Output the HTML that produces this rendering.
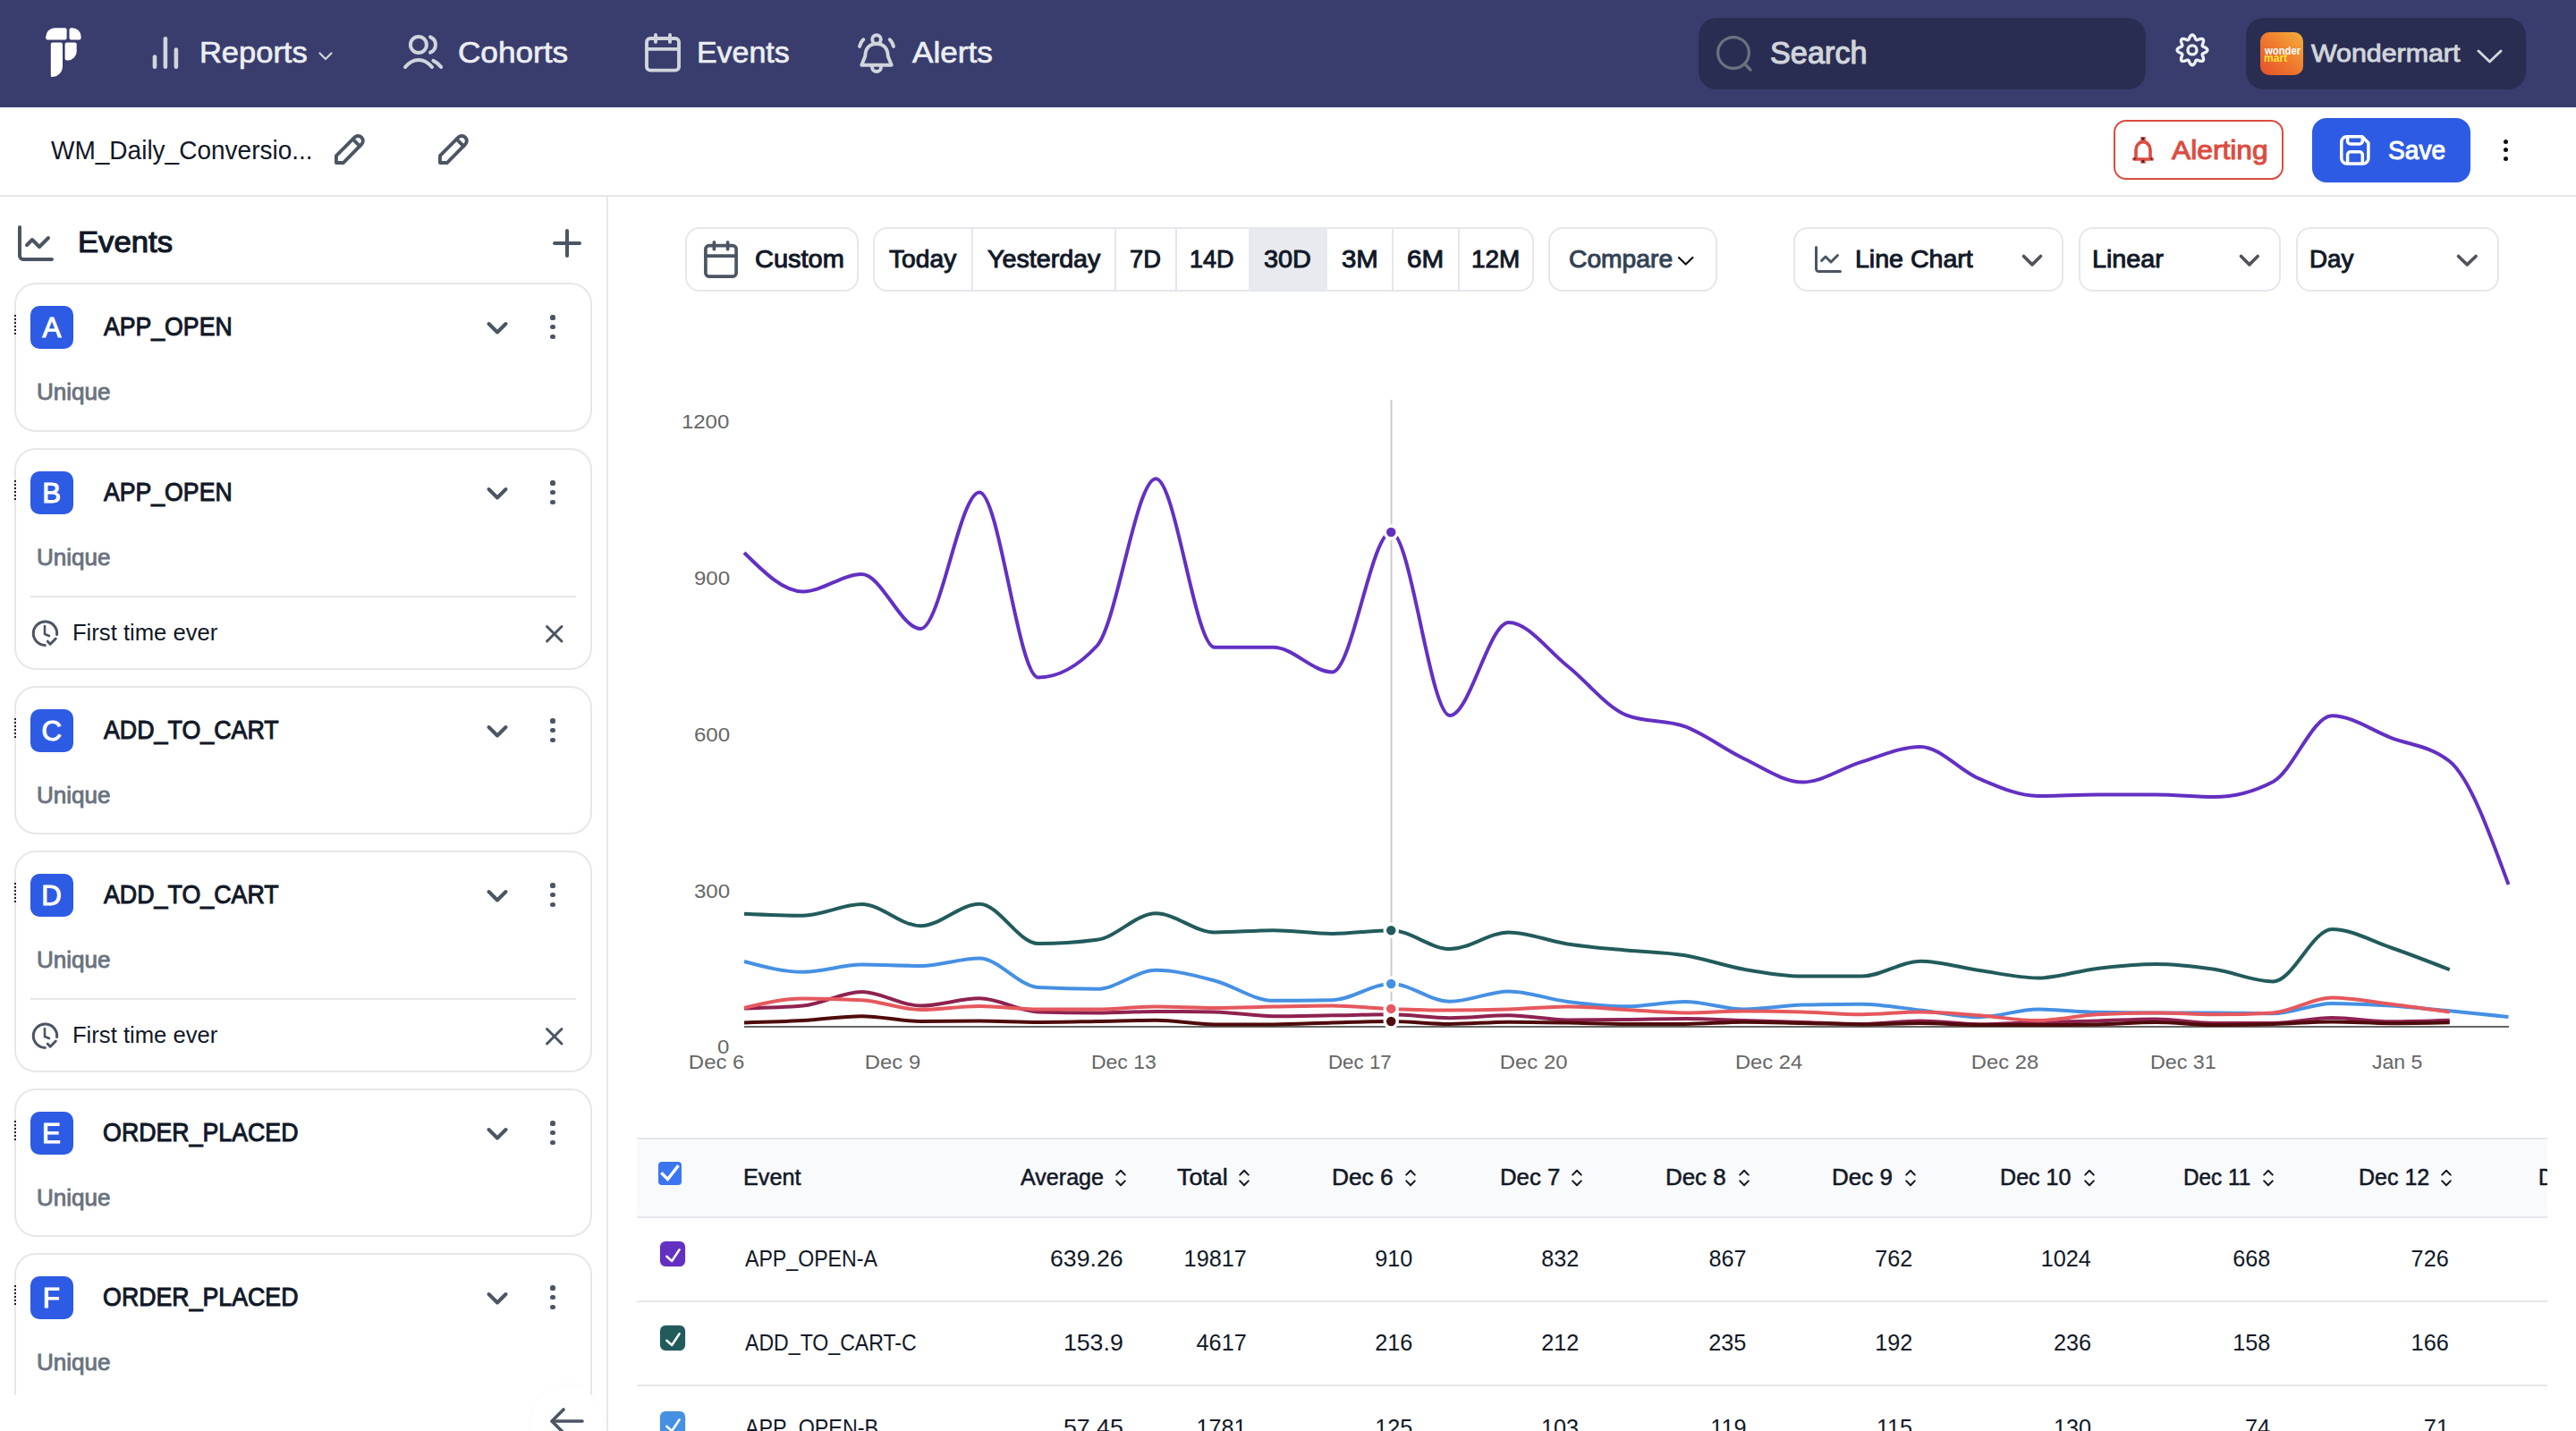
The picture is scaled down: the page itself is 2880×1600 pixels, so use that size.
<!DOCTYPE html>
<html><head><meta charset="utf-8"><style>
html,body{margin:0;padding:0;}
body{width:2880px;height:1600px;position:relative;overflow:hidden;background:#fff;font-family:"Liberation Sans",sans-serif;}
.t{position:absolute;white-space:nowrap;font-family:"Liberation Sans",sans-serif;}
.b{position:absolute;}
.s{position:absolute;overflow:visible;}
@media (max-width:2000px){body{zoom:0.5;}}
</style></head><body>
<div class="b" style="left:0px;top:0px;width:2880px;height:120px;background:#393d6d;"></div>
<svg class="s" style="left:45px;top:25px;width:55px;height:67px;" viewBox="45 25 55 67"><path fill="#fff" d="M61.2 31.2 H72.6 A2 2 0 0 1 74.6 33.2 V42.6 A2 2 0 0 1 72.6 44.6 H53.2 A2 2 0 0 1 51.2 42.6 V41.2 A10 10 0 0 1 61.2 31.2 Z"/><path fill="#fff" d="M79.5 31.2 H81 A9.6 9.6 0 0 1 90.6 40.8 V42.6 A2 2 0 0 1 88.6 44.6 H79.5 A2 2 0 0 1 77.5 42.6 V33.2 A2 2 0 0 1 79.5 31.2 Z"/><path fill="#fff" d="M58.8 47.5 H68 A2 2 0 0 1 70 49.5 V74 A12 12 0 0 1 58 86 A1.2 1.2 0 0 1 56.8 84.8 V49.5 A2 2 0 0 1 58.8 47.5 Z"/><path fill="#fff" d="M74.6 47.5 H83.7 A2 2 0 0 1 85.7 49.5 V57.5 A10 10 0 0 1 75.7 67.5 H74.6 A2 2 0 0 1 72.6 65.5 V49.5 A2 2 0 0 1 74.6 47.5 Z"/></svg>
<svg class="s" style="left:160px;top:30px;width:50px;height:60px;" viewBox="160 30 50 60"><g stroke="#d1d5db" stroke-width="4.6" stroke-linecap="round"><line x1="173" y1="63.5" x2="173" y2="74.8"/><line x1="184.9" y1="43.3" x2="184.9" y2="74.8"/><line x1="196.9" y1="55.5" x2="196.9" y2="74.8"/></g></svg>
<div class="t" style="left:223.19px;top:42.04px;font-size:33.62px;line-height:33.62px;font-weight:400;color:#eceef2;transform:scaleX(1.0262);transform-origin:2.41px 0;-webkit-text-stroke:0.67px #eceef2;">Reports</div>
<svg class="s" style="left:350px;top:50px;width:30px;height:25px;" viewBox="350 50 30 25"><path d="M357.5 59.5 L364 66 L370.5 59.5" fill="none" stroke="#d1d5db" stroke-width="2.2" stroke-linecap="round" stroke-linejoin="round"/></svg>
<svg class="s" style="left:440px;top:30px;width:70px;height:60px;" viewBox="440 30 70 60"><g fill="none" stroke="#d1d5db" stroke-width="4" stroke-linecap="round"><circle cx="467.9" cy="50" r="9"/><path d="M481.1 41.3 A9.4 9.4 0 0 1 481.1 58.7"/><path d="M453 75 C458 69 462.5 66.9 467.9 66.9 C473.3 66.9 478 69 483 75"/><path d="M484.4 67.9 C488 69.5 491 72 493.2 75"/></g></svg>
<div class="t" style="left:512.09px;top:41.54px;font-size:33.62px;line-height:33.62px;font-weight:400;color:#eceef2;transform:scaleX(1.0476);transform-origin:1.41px 0;-webkit-text-stroke:0.67px #eceef2;">Cohorts</div>
<svg class="s" style="left:721px;top:37px;width:40px;height:43.599999999999994px" viewBox="2 1 20 22" preserveAspectRatio="none" fill="none" stroke="#d1d5db" stroke-width="1.95" stroke-linecap="round" stroke-linejoin="round"><rect width="18" height="18" x="3" y="4" rx="2"/><path d="M16 2v4"/><path d="M8 2v4"/><path d="M3 10h18"/></svg>
<div class="t" style="left:778.99px;top:41.54px;font-size:33.62px;line-height:33.62px;font-weight:400;color:#eceef2;transform:scaleX(1.0097);transform-origin:2.41px 0;-webkit-text-stroke:0.67px #eceef2;">Events</div>
<svg class="s" style="left:950px;top:30px;width:60px;height:60px;" viewBox="950 30 60 60"><g fill="none" stroke="#d1d5db" stroke-width="3.9" stroke-linecap="round" stroke-linejoin="round"><circle cx="980" cy="44" r="4.8"/><path d="M963.3 72.8 L967.2 63 C967.5 54 972 49 980 49 C988 49 992.5 54 992.8 63 L996.7 72.8 Z"/><path d="M975 75 A5 5 0 0 0 985 75"/><path d="M965.3 44.3 C963.5 45.8 962 48.5 961 52"/><path d="M994.7 44.3 C996.5 45.8 998 48.5 999 52"/></g></svg>
<div class="t" style="left:1020.21px;top:41.54px;font-size:33.62px;line-height:33.62px;font-weight:400;color:#eceef2;transform:scaleX(1.0436);transform-origin:-0.21px 0;-webkit-text-stroke:0.67px #eceef2;">Alerts</div>
<div class="b" style="left:1899px;top:20px;width:500px;height:80px;background:#2a2d52;border-radius:20px;"></div>
<svg class="s" style="left:1910px;top:30px;width:60px;height:60px;" viewBox="1910 30 60 60"><g fill="none" stroke="#6b7280" stroke-width="3.2" stroke-linecap="round"><circle cx="1938" cy="59" r="17.4"/><path d="M1950.5 71.5 L1957 78"/></g></svg>
<div class="t" style="left:1978.96px;top:41.96px;font-size:34.78px;line-height:34.78px;font-weight:400;color:#d1d5db;transform:scaleX(0.9858);transform-origin:1.04px 0;-webkit-text-stroke:1.18px #d1d5db;">Search</div>
<svg class="s" style="left:2420px;top:25px;width:60px;height:60px;" viewBox="2420 25 60 60"><g fill="none" stroke="#eef0f4" stroke-width="3.4" stroke-linejoin="round"><path d="M2451.00 39.00 L2451.33 39.03 L2451.66 39.13 L2451.98 39.29 L2452.29 39.50 L2452.59 39.77 L2452.87 40.08 L2453.14 40.43 L2453.39 40.81 L2453.62 41.21 L2453.84 41.63 L2454.04 42.05 L2454.23 42.46 L2454.40 42.85 L2454.57 43.23 L2454.74 43.57 L2454.91 43.87 L2455.08 44.13 L2455.26 44.35 L2455.46 44.51 L2455.67 44.63 L2455.90 44.70 L2456.16 44.72 L2456.44 44.69 L2456.74 44.63 L2457.08 44.53 L2457.43 44.41 L2457.82 44.27 L2458.22 44.11 L2458.65 43.96 L2459.08 43.80 L2459.53 43.66 L2459.98 43.54 L2460.43 43.45 L2460.86 43.39 L2461.28 43.37 L2461.68 43.39 L2462.06 43.46 L2462.39 43.57 L2462.69 43.74 L2462.95 43.95 L2463.16 44.21 L2463.33 44.51 L2463.44 44.84 L2463.51 45.22 L2463.53 45.62 L2463.51 46.04 L2463.45 46.47 L2463.36 46.92 L2463.24 47.37 L2463.10 47.82 L2462.94 48.25 L2462.79 48.68 L2462.63 49.08 L2462.49 49.47 L2462.37 49.82 L2462.27 50.16 L2462.21 50.46 L2462.18 50.74 L2462.20 51.00 L2462.27 51.23 L2462.39 51.44 L2462.55 51.64 L2462.77 51.82 L2463.03 51.99 L2463.33 52.16 L2463.67 52.33 L2464.05 52.50 L2464.44 52.67 L2464.85 52.86 L2465.27 53.06 L2465.69 53.28 L2466.09 53.51 L2466.47 53.76 L2466.82 54.03 L2467.13 54.31 L2467.40 54.61 L2467.61 54.92 L2467.77 55.24 L2467.87 55.57 L2467.90 55.90 L2467.87 56.23 L2467.77 56.56 L2467.61 56.88 L2467.40 57.19 L2467.13 57.49 L2466.82 57.77 L2466.47 58.04 L2466.09 58.29 L2465.69 58.52 L2465.27 58.74 L2464.85 58.94 L2464.44 59.13 L2464.05 59.30 L2463.67 59.47 L2463.33 59.64 L2463.03 59.81 L2462.77 59.98 L2462.55 60.16 L2462.39 60.36 L2462.27 60.57 L2462.20 60.80 L2462.18 61.06 L2462.21 61.34 L2462.27 61.64 L2462.37 61.98 L2462.49 62.33 L2462.63 62.72 L2462.79 63.12 L2462.94 63.55 L2463.10 63.98 L2463.24 64.43 L2463.36 64.88 L2463.45 65.33 L2463.51 65.76 L2463.53 66.18 L2463.51 66.58 L2463.44 66.96 L2463.33 67.29 L2463.16 67.59 L2462.95 67.85 L2462.69 68.06 L2462.39 68.23 L2462.06 68.34 L2461.68 68.41 L2461.28 68.43 L2460.86 68.41 L2460.43 68.35 L2459.98 68.26 L2459.53 68.14 L2459.08 68.00 L2458.65 67.84 L2458.22 67.69 L2457.82 67.53 L2457.43 67.39 L2457.08 67.27 L2456.74 67.17 L2456.44 67.11 L2456.16 67.08 L2455.90 67.10 L2455.67 67.17 L2455.46 67.29 L2455.26 67.45 L2455.08 67.67 L2454.91 67.93 L2454.74 68.23 L2454.57 68.57 L2454.40 68.95 L2454.23 69.34 L2454.04 69.75 L2453.84 70.17 L2453.62 70.59 L2453.39 70.99 L2453.14 71.37 L2452.87 71.72 L2452.59 72.03 L2452.29 72.30 L2451.98 72.51 L2451.66 72.67 L2451.33 72.77 L2451.00 72.80 L2450.67 72.77 L2450.34 72.67 L2450.02 72.51 L2449.71 72.30 L2449.41 72.03 L2449.13 71.72 L2448.86 71.37 L2448.61 70.99 L2448.38 70.59 L2448.16 70.17 L2447.96 69.75 L2447.77 69.34 L2447.60 68.95 L2447.43 68.57 L2447.26 68.23 L2447.09 67.93 L2446.92 67.67 L2446.74 67.45 L2446.54 67.29 L2446.33 67.17 L2446.10 67.10 L2445.84 67.08 L2445.56 67.11 L2445.26 67.17 L2444.92 67.27 L2444.57 67.39 L2444.18 67.53 L2443.78 67.69 L2443.35 67.84 L2442.92 68.00 L2442.47 68.14 L2442.02 68.26 L2441.57 68.35 L2441.14 68.41 L2440.72 68.43 L2440.32 68.41 L2439.94 68.34 L2439.61 68.23 L2439.31 68.06 L2439.05 67.85 L2438.84 67.59 L2438.67 67.29 L2438.56 66.96 L2438.49 66.58 L2438.47 66.18 L2438.49 65.76 L2438.55 65.33 L2438.64 64.88 L2438.76 64.43 L2438.90 63.98 L2439.06 63.55 L2439.21 63.12 L2439.37 62.72 L2439.51 62.33 L2439.63 61.98 L2439.73 61.64 L2439.79 61.34 L2439.82 61.06 L2439.80 60.80 L2439.73 60.57 L2439.61 60.36 L2439.45 60.16 L2439.23 59.98 L2438.97 59.81 L2438.67 59.64 L2438.33 59.47 L2437.95 59.30 L2437.56 59.13 L2437.15 58.94 L2436.73 58.74 L2436.31 58.52 L2435.91 58.29 L2435.53 58.04 L2435.18 57.77 L2434.87 57.49 L2434.60 57.19 L2434.39 56.88 L2434.23 56.56 L2434.13 56.23 L2434.10 55.90 L2434.13 55.57 L2434.23 55.24 L2434.39 54.92 L2434.60 54.61 L2434.87 54.31 L2435.18 54.03 L2435.53 53.76 L2435.91 53.51 L2436.31 53.28 L2436.73 53.06 L2437.15 52.86 L2437.56 52.67 L2437.95 52.50 L2438.33 52.33 L2438.67 52.16 L2438.97 51.99 L2439.23 51.82 L2439.45 51.64 L2439.61 51.44 L2439.73 51.23 L2439.80 51.00 L2439.82 50.74 L2439.79 50.46 L2439.73 50.16 L2439.63 49.82 L2439.51 49.47 L2439.37 49.08 L2439.21 48.68 L2439.06 48.25 L2438.90 47.82 L2438.76 47.37 L2438.64 46.92 L2438.55 46.47 L2438.49 46.04 L2438.47 45.62 L2438.49 45.22 L2438.56 44.84 L2438.67 44.51 L2438.84 44.21 L2439.05 43.95 L2439.31 43.74 L2439.61 43.57 L2439.94 43.46 L2440.32 43.39 L2440.72 43.37 L2441.14 43.39 L2441.57 43.45 L2442.02 43.54 L2442.47 43.66 L2442.92 43.80 L2443.35 43.96 L2443.78 44.11 L2444.18 44.27 L2444.57 44.41 L2444.92 44.53 L2445.26 44.63 L2445.56 44.69 L2445.84 44.72 L2446.10 44.70 L2446.33 44.63 L2446.54 44.51 L2446.74 44.35 L2446.92 44.13 L2447.09 43.87 L2447.26 43.57 L2447.43 43.23 L2447.60 42.85 L2447.77 42.46 L2447.96 42.05 L2448.16 41.63 L2448.38 41.21 L2448.61 40.81 L2448.86 40.43 L2449.13 40.08 L2449.41 39.77 L2449.71 39.50 L2450.02 39.29 L2450.34 39.13 L2450.67 39.03 L2451.00 39.00Z"/><circle cx="2451" cy="55.9" r="5"/></g></svg>
<div class="b" style="left:2511px;top:20px;width:313px;height:80px;background:#2a2d52;border-radius:20px;"></div>
<div class="b" style="left:2527px;top:36px;width:48px;height:48px;border-radius:10px;background:linear-gradient(225deg,#f4b03c 0%,#ef7a2e 50%,#e4502c 100%)"></div>
<div class="t" style="left:2531.50px;top:50.62px;font-size:12.5px;line-height:12.5px;font-weight:700;color:#ffffff;transform:scaleX(0.9014);transform-origin:0.00px 0;">wonder</div>
<div class="t" style="left:2530.62px;top:59.42px;font-size:12.5px;line-height:12.5px;font-weight:700;color:#f6e33a;transform:scaleX(0.9615);transform-origin:0.88px 0;">mart</div>
<div class="t" style="left:2584.34px;top:46.43px;font-size:27.25px;line-height:27.25px;font-weight:400;color:#d1d5db;transform:scaleX(1.1129);transform-origin:-0.34px 0;-webkit-text-stroke:0.93px #d1d5db;">Wondermart</div>
<svg class="s" style="left:2760px;top:45px;width:50px;height:35px;" viewBox="2760 45 50 35"><path d="M2771 57 L2783.5 69 L2796 57" fill="none" stroke="#d1d5db" stroke-width="3" stroke-linecap="round" stroke-linejoin="round"/></svg>
<div class="b" style="left:0px;top:218px;width:2880px;height:2px;background:#e5e7eb;"></div>
<div class="t" style="left:56.88px;top:152.97px;font-size:29.57px;line-height:29.57px;font-weight:400;color:#111827;transform:scaleX(0.9475);transform-origin:0.12px 0;">WM_Daily_Conversio...</div>
<svg class="s" style="left:373.7px;top:151px;width:33.10000000000002px;height:33px" viewBox="3 4.2 17 16.8" preserveAspectRatio="none" fill="none" stroke="#4b5563" stroke-width="2.0" stroke-linecap="round" stroke-linejoin="round"><path d="M4 20h4l10.5 -10.5a2.828 2.828 0 1 0 -4 -4l-10.5 10.5v4"/><path d="M13.5 6.5l4 4"/></svg>
<svg class="s" style="left:490px;top:151px;width:33.10000000000002px;height:33px" viewBox="3 4.2 17 16.8" preserveAspectRatio="none" fill="none" stroke="#4b5563" stroke-width="2.0" stroke-linecap="round" stroke-linejoin="round"><path d="M4 20h4l10.5 -10.5a2.828 2.828 0 1 0 -4 -4l-10.5 10.5v4"/><path d="M13.5 6.5l4 4"/></svg>
<div class="b" style="left:2363px;top:134px;width:190px;height:67px;border:2px solid #dc4c3f;border-radius:14px;box-sizing:border-box;"></div>
<svg class="s" style="left:2378px;top:148px;width:36px;height:40px;" viewBox="2378 148 36 40"><g fill="none" stroke="#dc4c3f" stroke-width="3.6" stroke-linejoin="round"><path d="M2388 176 V167.4 A8 8.8 0 0 1 2404 167.4 V176 L2406.2 178 H2385.8 Z"/></g><rect x="2393.3" y="153" width="5.4" height="6" fill="#dc4c3f"/><rect x="2393.3" y="178.5" width="5.4" height="4.2" fill="#dc4c3f"/><g fill="#222"><circle cx="2395.8" cy="155.3" r="1.3"/><circle cx="2395.9" cy="180.4" r="1.3"/><circle cx="2386.6" cy="177.4" r="1"/><circle cx="2405.3" cy="177.4" r="1"/></g></svg>
<div class="t" style="left:2428.39px;top:153.02px;font-size:29.86px;line-height:29.86px;font-weight:400;color:#dc4c3f;transform:scaleX(1.0627);transform-origin:-0.39px 0;-webkit-text-stroke:1.02px #dc4c3f;">Alerting</div>
<div class="b" style="left:2585px;top:132px;width:177px;height:72px;background:#2d5be3;border-radius:16px;"></div>
<svg class="s" style="left:2605px;top:140px;width:60px;height:55px;" viewBox="2605 140 60 55"><g fill="none" stroke="#fff" stroke-width="3.5" stroke-linejoin="round"><path d="M2623.8 152.8 H2641 L2647.9 159.7 V177 A6 6 0 0 1 2641.9 183 H2623.8 A6 6 0 0 1 2617.8 177 V158.8 A6 6 0 0 1 2623.8 152.8 Z"/><path d="M2624.6 152.8 V157.8 A3.3 3.3 0 0 0 2627.9 161.1 H2638 A3.3 3.3 0 0 0 2641.3 157.8 V153"/><path d="M2624.6 183 V173.1 A3.3 3.3 0 0 1 2627.9 169.8 H2638 A3.3 3.3 0 0 1 2641.3 173.1 V183"/></g></svg>
<div class="t" style="left:2669.73px;top:153.27px;font-size:29.57px;line-height:29.57px;font-weight:400;color:#ffffff;transform:scaleX(0.9506);transform-origin:0.87px 0;-webkit-text-stroke:1.01px #ffffff;">Save</div>
<div class="b" style="left:2798.5px;top:155.9px;width:5px;height:5px;border-radius:50%;background:#111"></div>
<div class="b" style="left:2798.5px;top:165.4px;width:5px;height:5px;border-radius:50%;background:#111"></div>
<div class="b" style="left:2798.5px;top:175.0px;width:5px;height:5px;border-radius:50%;background:#111"></div>
<div class="b" style="left:678px;top:220px;width:2px;height:1380px;background:#e5e7eb;"></div>
<svg class="s" style="left:20px;top:252px;width:40px;height:40px" viewBox="2 2 20 20" preserveAspectRatio="none" fill="none" stroke="#4b5563" stroke-width="2.0" stroke-linecap="round" stroke-linejoin="round"><path d="M3 3v16a2 2 0 0 0 2 2h16"/><path d="m19 9-5 5-4-4-3 3"/></svg>
<div class="t" style="left:87.42px;top:254.41px;font-size:33.77px;line-height:33.77px;font-weight:400;color:#111827;transform:scaleX(1.0276);transform-origin:2.18px 0;-webkit-text-stroke:1.15px #111827;">Events</div>
<svg class="s" style="left:610px;top:250px;width:50px;height:45px;" viewBox="610 250 50 45"><g stroke="#4b5563" stroke-width="4" stroke-linecap="round"><path d="M634 258 V286"/><path d="M620 272 H648"/></g></svg>
<div class="b" style="left:0;top:220px;width:678px;height:1340px;overflow:hidden">
<div class="b" style="left:16px;top:96px;width:646px;height:167px;box-sizing:border-box;border:2px solid #e5e7eb;border-radius:24px;background:#fff"></div>
<div class="b" style="left:16px;top:281px;width:646px;height:248px;box-sizing:border-box;border:2px solid #e5e7eb;border-radius:24px;background:#fff"></div>
<div class="b" style="left:16px;top:547px;width:646px;height:166px;box-sizing:border-box;border:2px solid #e5e7eb;border-radius:24px;background:#fff"></div>
<div class="b" style="left:16px;top:731px;width:646px;height:248px;box-sizing:border-box;border:2px solid #e5e7eb;border-radius:24px;background:#fff"></div>
<div class="b" style="left:16px;top:997px;width:646px;height:166px;box-sizing:border-box;border:2px solid #e5e7eb;border-radius:24px;background:#fff"></div>
<div class="b" style="left:16px;top:1181px;width:646px;height:299px;box-sizing:border-box;border:2px solid #e5e7eb;border-radius:24px;background:#fff"></div>
</div>
<div class="b" style="left:34px;top:341.5px;width:48px;height:48.0px;background:#2d5be3;border-radius:10px;"></div>
<div class="t" style="left:47.61px;top:350.62px;font-size:31.16px;line-height:31.16px;font-weight:400;color:#fff;-webkit-text-stroke:1.06px #fff;">A</div>
<div class="b" style="left:16px;top:351.9px;width:2.2px;height:2.2px;background:#222"></div>
<div class="b" style="left:16px;top:355.9px;width:2.2px;height:2.2px;background:#222"></div>
<div class="b" style="left:16px;top:359.9px;width:2.2px;height:2.2px;background:#222"></div>
<div class="b" style="left:16px;top:363.9px;width:2.2px;height:2.2px;background:#222"></div>
<div class="b" style="left:16px;top:367.9px;width:2.2px;height:2.2px;background:#222"></div>
<div class="b" style="left:16px;top:371.9px;width:2.2px;height:2.2px;background:#222"></div>
<div class="t" style="left:115.78px;top:350.35px;font-size:29.71px;line-height:29.71px;font-weight:400;color:#111827;transform:scaleX(0.8974);transform-origin:-0.38px 0;-webkit-text-stroke:1.01px #111827;">APP_OPEN</div>
<svg class="s" style="left:535px;top:351px;width:40px;height:33px;" viewBox="535 351 40 33"><path d="M546.5 362 L556 371.5 L565.5 362" fill="none" stroke="#4b5563" stroke-width="4" stroke-linecap="round" stroke-linejoin="round"/></svg>
<div class="b" style="left:615.4px;top:352.4px;width:5.2px;height:5.2px;border-radius:50%;background:#4b5563"></div>
<div class="b" style="left:615.4px;top:363.2px;width:5.2px;height:5.2px;border-radius:50%;background:#4b5563"></div>
<div class="b" style="left:615.4px;top:374.0px;width:5.2px;height:5.2px;border-radius:50%;background:#4b5563"></div>
<div class="t" style="left:41.43px;top:426.41px;font-size:25.51px;line-height:25.51px;font-weight:400;color:#6b7280;transform:scaleX(1.0213);transform-origin:1.57px 0;-webkit-text-stroke:0.87px #6b7280;">Unique</div>
<div class="b" style="left:34px;top:526.5px;width:48px;height:48.0px;background:#2d5be3;border-radius:10px;"></div>
<div class="t" style="left:47.18px;top:535.62px;font-size:31.16px;line-height:31.16px;font-weight:400;color:#fff;-webkit-text-stroke:1.06px #fff;">B</div>
<div class="b" style="left:16px;top:536.9px;width:2.2px;height:2.2px;background:#222"></div>
<div class="b" style="left:16px;top:540.9px;width:2.2px;height:2.2px;background:#222"></div>
<div class="b" style="left:16px;top:544.9px;width:2.2px;height:2.2px;background:#222"></div>
<div class="b" style="left:16px;top:548.9px;width:2.2px;height:2.2px;background:#222"></div>
<div class="b" style="left:16px;top:552.9px;width:2.2px;height:2.2px;background:#222"></div>
<div class="b" style="left:16px;top:556.9px;width:2.2px;height:2.2px;background:#222"></div>
<div class="t" style="left:115.78px;top:535.35px;font-size:29.71px;line-height:29.71px;font-weight:400;color:#111827;transform:scaleX(0.8974);transform-origin:-0.38px 0;-webkit-text-stroke:1.01px #111827;">APP_OPEN</div>
<svg class="s" style="left:535px;top:536px;width:40px;height:33px;" viewBox="535 536 40 33"><path d="M546.5 547 L556 556.5 L565.5 547" fill="none" stroke="#4b5563" stroke-width="4" stroke-linecap="round" stroke-linejoin="round"/></svg>
<div class="b" style="left:615.4px;top:537.4px;width:5.2px;height:5.2px;border-radius:50%;background:#4b5563"></div>
<div class="b" style="left:615.4px;top:548.1999999999999px;width:5.2px;height:5.2px;border-radius:50%;background:#4b5563"></div>
<div class="b" style="left:615.4px;top:559.0px;width:5.2px;height:5.2px;border-radius:50%;background:#4b5563"></div>
<div class="t" style="left:41.43px;top:611.41px;font-size:25.51px;line-height:25.51px;font-weight:400;color:#6b7280;transform:scaleX(1.0213);transform-origin:1.57px 0;-webkit-text-stroke:0.87px #6b7280;">Unique</div>
<div class="b" style="left:34px;top:666px;width:610px;height:2px;background:#e5e7eb;"></div>
<svg class="s" style="left:30px;top:687px;width:42px;height:42px;" viewBox="30 687 42 42"><g fill="none" stroke="#4b5563" stroke-width="3" stroke-linecap="round" stroke-linejoin="round"><path d="M63.6 709.6 A13.2 13.2 0 1 0 50.4 721.4"/><path d="M50 700 V709 L55 711" stroke-width="2.6"/><path d="M53.3 717.2 L56.2 720.2 L62.3 714"/></g></svg>
<div class="t" style="left:81.40px;top:694.90px;font-size:24.93px;line-height:24.93px;font-weight:400;color:#111827;transform:scaleX(1.0292);transform-origin:2.00px 0;">First time ever</div>
<svg class="s" style="left:600px;top:691px;width:40px;height:36px;" viewBox="600 691 40 36"><g stroke="#4b5563" stroke-width="3" stroke-linecap="round"><path d="M611.5 700.5 L628 717"/><path d="M628 700.5 L611.5 717"/></g></svg>
<div class="b" style="left:34px;top:792.5px;width:48px;height:48.0px;background:#2d5be3;border-radius:10px;"></div>
<div class="t" style="left:46.55px;top:801.62px;font-size:31.16px;line-height:31.16px;font-weight:400;color:#fff;-webkit-text-stroke:1.06px #fff;">C</div>
<div class="b" style="left:16px;top:802.9px;width:2.2px;height:2.2px;background:#222"></div>
<div class="b" style="left:16px;top:806.9px;width:2.2px;height:2.2px;background:#222"></div>
<div class="b" style="left:16px;top:810.9px;width:2.2px;height:2.2px;background:#222"></div>
<div class="b" style="left:16px;top:814.9px;width:2.2px;height:2.2px;background:#222"></div>
<div class="b" style="left:16px;top:818.9px;width:2.2px;height:2.2px;background:#222"></div>
<div class="b" style="left:16px;top:822.9px;width:2.2px;height:2.2px;background:#222"></div>
<div class="t" style="left:115.78px;top:801.35px;font-size:29.71px;line-height:29.71px;font-weight:400;color:#111827;transform:scaleX(0.9028);transform-origin:-0.38px 0;-webkit-text-stroke:1.01px #111827;">ADD_TO_CART</div>
<svg class="s" style="left:535px;top:802px;width:40px;height:33px;" viewBox="535 802 40 33"><path d="M546.5 813 L556 822.5 L565.5 813" fill="none" stroke="#4b5563" stroke-width="4" stroke-linecap="round" stroke-linejoin="round"/></svg>
<div class="b" style="left:615.4px;top:803.4px;width:5.2px;height:5.2px;border-radius:50%;background:#4b5563"></div>
<div class="b" style="left:615.4px;top:814.1999999999999px;width:5.2px;height:5.2px;border-radius:50%;background:#4b5563"></div>
<div class="b" style="left:615.4px;top:825.0px;width:5.2px;height:5.2px;border-radius:50%;background:#4b5563"></div>
<div class="t" style="left:41.43px;top:877.41px;font-size:25.51px;line-height:25.51px;font-weight:400;color:#6b7280;transform:scaleX(1.0213);transform-origin:1.57px 0;-webkit-text-stroke:0.87px #6b7280;">Unique</div>
<div class="b" style="left:34px;top:976.5px;width:48px;height:48.0px;background:#2d5be3;border-radius:10px;"></div>
<div class="t" style="left:46.24px;top:985.62px;font-size:31.16px;line-height:31.16px;font-weight:400;color:#fff;-webkit-text-stroke:1.06px #fff;">D</div>
<div class="b" style="left:16px;top:986.9px;width:2.2px;height:2.2px;background:#222"></div>
<div class="b" style="left:16px;top:990.9px;width:2.2px;height:2.2px;background:#222"></div>
<div class="b" style="left:16px;top:994.9px;width:2.2px;height:2.2px;background:#222"></div>
<div class="b" style="left:16px;top:998.9px;width:2.2px;height:2.2px;background:#222"></div>
<div class="b" style="left:16px;top:1002.9px;width:2.2px;height:2.2px;background:#222"></div>
<div class="b" style="left:16px;top:1006.9px;width:2.2px;height:2.2px;background:#222"></div>
<div class="t" style="left:115.78px;top:985.35px;font-size:29.71px;line-height:29.71px;font-weight:400;color:#111827;transform:scaleX(0.9028);transform-origin:-0.38px 0;-webkit-text-stroke:1.01px #111827;">ADD_TO_CART</div>
<svg class="s" style="left:535px;top:986px;width:40px;height:33px;" viewBox="535 986 40 33"><path d="M546.5 997 L556 1006.5 L565.5 997" fill="none" stroke="#4b5563" stroke-width="4" stroke-linecap="round" stroke-linejoin="round"/></svg>
<div class="b" style="left:615.4px;top:987.4px;width:5.2px;height:5.2px;border-radius:50%;background:#4b5563"></div>
<div class="b" style="left:615.4px;top:998.1999999999999px;width:5.2px;height:5.2px;border-radius:50%;background:#4b5563"></div>
<div class="b" style="left:615.4px;top:1009.0px;width:5.2px;height:5.2px;border-radius:50%;background:#4b5563"></div>
<div class="t" style="left:41.43px;top:1061.41px;font-size:25.51px;line-height:25.51px;font-weight:400;color:#6b7280;transform:scaleX(1.0213);transform-origin:1.57px 0;-webkit-text-stroke:0.87px #6b7280;">Unique</div>
<div class="b" style="left:34px;top:1116px;width:610px;height:2px;background:#e5e7eb;"></div>
<svg class="s" style="left:30px;top:1137px;width:42px;height:42px;" viewBox="30 1137 42 42"><g fill="none" stroke="#4b5563" stroke-width="3" stroke-linecap="round" stroke-linejoin="round"><path d="M63.6 1159.6 A13.2 13.2 0 1 0 50.4 1171.4"/><path d="M50 1150 V1159 L55 1161" stroke-width="2.6"/><path d="M53.3 1167.2 L56.2 1170.2 L62.3 1164"/></g></svg>
<div class="t" style="left:81.40px;top:1144.90px;font-size:24.93px;line-height:24.93px;font-weight:400;color:#111827;transform:scaleX(1.0292);transform-origin:2.00px 0;">First time ever</div>
<svg class="s" style="left:600px;top:1141px;width:40px;height:36px;" viewBox="600 1141 40 36"><g stroke="#4b5563" stroke-width="3" stroke-linecap="round"><path d="M611.5 1150.5 L628 1167"/><path d="M628 1150.5 L611.5 1167"/></g></svg>
<div class="b" style="left:34px;top:1242.5px;width:48px;height:48.0px;background:#2d5be3;border-radius:10px;"></div>
<div class="t" style="left:47.05px;top:1251.62px;font-size:31.16px;line-height:31.16px;font-weight:400;color:#fff;-webkit-text-stroke:1.06px #fff;">E</div>
<div class="b" style="left:16px;top:1252.9px;width:2.2px;height:2.2px;background:#222"></div>
<div class="b" style="left:16px;top:1256.9px;width:2.2px;height:2.2px;background:#222"></div>
<div class="b" style="left:16px;top:1260.9px;width:2.2px;height:2.2px;background:#222"></div>
<div class="b" style="left:16px;top:1264.9px;width:2.2px;height:2.2px;background:#222"></div>
<div class="b" style="left:16px;top:1268.9px;width:2.2px;height:2.2px;background:#222"></div>
<div class="b" style="left:16px;top:1272.9px;width:2.2px;height:2.2px;background:#222"></div>
<div class="t" style="left:114.53px;top:1251.35px;font-size:29.71px;line-height:29.71px;font-weight:400;color:#111827;transform:scaleX(0.9002);transform-origin:0.87px 0;-webkit-text-stroke:1.01px #111827;">ORDER_PLACED</div>
<svg class="s" style="left:535px;top:1252px;width:40px;height:33px;" viewBox="535 1252 40 33"><path d="M546.5 1263 L556 1272.5 L565.5 1263" fill="none" stroke="#4b5563" stroke-width="4" stroke-linecap="round" stroke-linejoin="round"/></svg>
<div class="b" style="left:615.4px;top:1253.4px;width:5.2px;height:5.2px;border-radius:50%;background:#4b5563"></div>
<div class="b" style="left:615.4px;top:1264.2px;width:5.2px;height:5.2px;border-radius:50%;background:#4b5563"></div>
<div class="b" style="left:615.4px;top:1275.0px;width:5.2px;height:5.2px;border-radius:50%;background:#4b5563"></div>
<div class="t" style="left:41.43px;top:1327.41px;font-size:25.51px;line-height:25.51px;font-weight:400;color:#6b7280;transform:scaleX(1.0213);transform-origin:1.57px 0;-webkit-text-stroke:0.87px #6b7280;">Unique</div>
<div class="b" style="left:34px;top:1426.5px;width:48px;height:48.0px;background:#2d5be3;border-radius:10px;"></div>
<div class="t" style="left:47.86px;top:1435.62px;font-size:31.16px;line-height:31.16px;font-weight:400;color:#fff;-webkit-text-stroke:1.06px #fff;">F</div>
<div class="b" style="left:16px;top:1436.9px;width:2.2px;height:2.2px;background:#222"></div>
<div class="b" style="left:16px;top:1440.9px;width:2.2px;height:2.2px;background:#222"></div>
<div class="b" style="left:16px;top:1444.9px;width:2.2px;height:2.2px;background:#222"></div>
<div class="b" style="left:16px;top:1448.9px;width:2.2px;height:2.2px;background:#222"></div>
<div class="b" style="left:16px;top:1452.9px;width:2.2px;height:2.2px;background:#222"></div>
<div class="b" style="left:16px;top:1456.9px;width:2.2px;height:2.2px;background:#222"></div>
<div class="t" style="left:114.53px;top:1435.35px;font-size:29.71px;line-height:29.71px;font-weight:400;color:#111827;transform:scaleX(0.9002);transform-origin:0.87px 0;-webkit-text-stroke:1.01px #111827;">ORDER_PLACED</div>
<svg class="s" style="left:535px;top:1436px;width:40px;height:33px;" viewBox="535 1436 40 33"><path d="M546.5 1447 L556 1456.5 L565.5 1447" fill="none" stroke="#4b5563" stroke-width="4" stroke-linecap="round" stroke-linejoin="round"/></svg>
<div class="b" style="left:615.4px;top:1437.4px;width:5.2px;height:5.2px;border-radius:50%;background:#4b5563"></div>
<div class="b" style="left:615.4px;top:1448.2px;width:5.2px;height:5.2px;border-radius:50%;background:#4b5563"></div>
<div class="b" style="left:615.4px;top:1459.0px;width:5.2px;height:5.2px;border-radius:50%;background:#4b5563"></div>
<div class="t" style="left:41.43px;top:1511.41px;font-size:25.51px;line-height:25.51px;font-weight:400;color:#6b7280;transform:scaleX(1.0213);transform-origin:1.57px 0;-webkit-text-stroke:0.87px #6b7280;">Unique</div>
<div class="b" style="left:594px;top:1549px;width:80px;height:80px;border-radius:50%;box-shadow:0 0 8px rgba(0,0,0,0.025);background:#fff"></div>
<svg class="s" style="left:600px;top:1560px;width:70px;height:40px;" viewBox="600 1560 70 40"><g fill="none" stroke="#4b5563" stroke-width="3.6" stroke-linecap="round" stroke-linejoin="round"><path d="M630 1576 L617 1589 L630 1602"/><path d="M617.5 1589 H651"/></g></svg>
<div class="b" style="left:678px;top:1500px;width:2px;height:100px;background:#e5e7eb;"></div>
<div class="b" style="left:766px;top:254px;width:194px;height:72px;box-sizing:border-box;border:2px solid #e5e7eb;border-radius:16px;background:#fff"></div>
<svg class="s" style="left:787px;top:269px;width:38px;height:42px" viewBox="2 1 20 22" preserveAspectRatio="none" fill="none" stroke="#4b5563" stroke-width="1.95" stroke-linecap="round" stroke-linejoin="round"><rect width="18" height="18" x="3" y="4" rx="2"/><path d="M16 2v4"/><path d="M8 2v4"/><path d="M3 10h18"/></svg>
<div class="t" style="left:843.61px;top:274.95px;font-size:28.41px;line-height:28.41px;font-weight:400;color:#111827;transform:scaleX(1.0200);transform-origin:0.89px 0;-webkit-text-stroke:0.97px #111827;">Custom</div>
<div class="b" style="left:975.5px;top:254px;width:739.5px;height:72px;box-sizing:border-box;border:2px solid #e5e7eb;border-radius:16px;background:#fff"></div>
<div class="b" style="left:1395.5px;top:256px;width:88.5px;height:68px;background:#e9eaef;"></div>
<div class="b" style="left:1086px;top:256px;width:2px;height:68px;background:#e5e7eb;"></div>
<div class="b" style="left:1246px;top:256px;width:2px;height:68px;background:#e5e7eb;"></div>
<div class="b" style="left:1314px;top:256px;width:2px;height:68px;background:#e5e7eb;"></div>
<div class="b" style="left:1556px;top:256px;width:2px;height:68px;background:#e5e7eb;"></div>
<div class="b" style="left:1630px;top:256px;width:2px;height:68px;background:#e5e7eb;"></div>
<div class="t" style="left:993.86px;top:274.95px;font-size:28.41px;line-height:28.41px;font-weight:400;color:#111827;transform:scaleX(0.9926);transform-origin:0.14px 0;-webkit-text-stroke:0.97px #111827;">Today</div>
<div class="t" style="left:1103.66px;top:274.95px;font-size:28.41px;line-height:28.41px;font-weight:400;color:#111827;transform:scaleX(1.0086);transform-origin:0.14px 0;-webkit-text-stroke:0.97px #111827;">Yesterday</div>
<div class="t" style="left:1262.98px;top:274.95px;font-size:28.41px;line-height:28.41px;font-weight:400;color:#111827;transform:scaleX(0.9597);transform-origin:1.02px 0;-webkit-text-stroke:0.97px #111827;">7D</div>
<div class="t" style="left:1329.86px;top:274.95px;font-size:28.41px;line-height:28.41px;font-weight:400;color:#111827;transform:scaleX(0.9485);transform-origin:1.64px 0;-webkit-text-stroke:0.97px #111827;">14D</div>
<div class="t" style="left:1413.36px;top:274.95px;font-size:28.41px;line-height:28.41px;font-weight:400;color:#111827;transform:scaleX(1.0127);transform-origin:0.64px 0;-webkit-text-stroke:0.97px #111827;">30D</div>
<div class="t" style="left:1499.66px;top:274.95px;font-size:28.41px;line-height:28.41px;font-weight:400;color:#111827;transform:scaleX(1.0347);transform-origin:0.64px 0;-webkit-text-stroke:0.97px #111827;">3M</div>
<div class="t" style="left:1572.71px;top:274.95px;font-size:28.41px;line-height:28.41px;font-weight:400;color:#111827;transform:scaleX(1.0445);transform-origin:0.89px 0;-webkit-text-stroke:0.97px #111827;">6M</div>
<div class="t" style="left:1644.96px;top:274.95px;font-size:28.41px;line-height:28.41px;font-weight:400;color:#111827;transform:scaleX(0.9825);transform-origin:1.64px 0;-webkit-text-stroke:0.97px #111827;">12M</div>
<div class="b" style="left:1731px;top:254px;width:189px;height:72px;box-sizing:border-box;border:2px solid #e5e7eb;border-radius:16px;background:#fff"></div>
<div class="t" style="left:1753.71px;top:274.95px;font-size:28.41px;line-height:28.41px;font-weight:400;color:#334155;transform:scaleX(0.9938);transform-origin:0.89px 0;-webkit-text-stroke:0.97px #334155;">Compare</div>
<svg class="s" style="left:1870px;top:280px;width:30px;height:25px;" viewBox="1870 280 30 25"><path d="M1877 288 L1884.7 295.5 L1892.4 288" fill="none" stroke="#111" stroke-width="2.2" stroke-linecap="round" stroke-linejoin="round"/></svg>
<div class="b" style="left:2004.6px;top:254px;width:302.9000000000001px;height:72px;box-sizing:border-box;border:2px solid #e5e7eb;border-radius:16px;background:#fff"></div>
<svg class="s" style="left:2029px;top:275px;width:30px;height:30px" viewBox="2 2 20 20" preserveAspectRatio="none" fill="none" stroke="#4b5563" stroke-width="2.0" stroke-linecap="round" stroke-linejoin="round"><path d="M3 3v16a2 2 0 0 0 2 2h16"/><path d="m19 9-5 5-4-4-3 3"/></svg>
<div class="t" style="left:2074.11px;top:274.95px;font-size:28.41px;line-height:28.41px;font-weight:400;color:#111827;transform:scaleX(1.0054);transform-origin:1.89px 0;-webkit-text-stroke:0.97px #111827;">Line Chart</div>
<svg class="s" style="left:2251px;top:275px;width:42px;height:32.39999999999998px;" viewBox="2251 275 42 32.39999999999998"><path d="M2262.5 286.5 L2272.0 295.9 L2281.5 286.5" fill="none" stroke="#52525b" stroke-width="3.6" stroke-linecap="round" stroke-linejoin="round"/></svg>
<div class="b" style="left:2324px;top:254px;width:226.4000000000001px;height:72px;box-sizing:border-box;border:2px solid #e5e7eb;border-radius:16px;background:#fff"></div>
<div class="t" style="left:2339.11px;top:274.95px;font-size:28.41px;line-height:28.41px;font-weight:400;color:#111827;transform:scaleX(1.0121);transform-origin:1.89px 0;-webkit-text-stroke:0.97px #111827;">Linear</div>
<svg class="s" style="left:2494.3px;top:275px;width:41.69999999999982px;height:32.39999999999998px;" viewBox="2494.3 275 41.69999999999982 32.39999999999998"><path d="M2505.8 286.5 L2515.15 295.9 L2524.5 286.5" fill="none" stroke="#52525b" stroke-width="3.6" stroke-linecap="round" stroke-linejoin="round"/></svg>
<div class="b" style="left:2567px;top:254px;width:227px;height:72px;box-sizing:border-box;border:2px solid #e5e7eb;border-radius:16px;background:#fff"></div>
<div class="t" style="left:2582.11px;top:274.95px;font-size:28.41px;line-height:28.41px;font-weight:400;color:#111827;transform:scaleX(0.9790);transform-origin:1.89px 0;-webkit-text-stroke:0.97px #111827;">Day</div>
<svg class="s" style="left:2737px;top:275px;width:42.59999999999991px;height:32.39999999999998px;" viewBox="2737 275 42.59999999999991 32.39999999999998"><path d="M2748.5 286.5 L2758.3 295.9 L2768.1 286.5" fill="none" stroke="#52525b" stroke-width="3.6" stroke-linecap="round" stroke-linejoin="round"/></svg>
<div class="t" style="left:762.45px;top:460.99px;font-size:22.46px;line-height:22.46px;font-weight:400;color:#666666;transform:scaleX(1.0700);transform-origin:1.75px 0;">1200</div>
<div class="t" style="left:775.75px;top:635.99px;font-size:22.46px;line-height:22.46px;font-weight:400;color:#666666;transform:scaleX(1.0700);transform-origin:1.00px 0;">900</div>
<div class="t" style="left:775.76px;top:810.99px;font-size:22.46px;line-height:22.46px;font-weight:400;color:#666666;transform:scaleX(1.0700);transform-origin:1.12px 0;">600</div>
<div class="t" style="left:775.74px;top:985.99px;font-size:22.46px;line-height:22.46px;font-weight:400;color:#666666;transform:scaleX(1.0700);transform-origin:0.87px 0;">300</div>
<div class="t" style="left:802.44px;top:1160.29px;font-size:22.46px;line-height:22.46px;font-weight:400;color:#666666;transform:scaleX(1.0700);transform-origin:0.87px 0;">0</div>
<div class="t" style="left:769.75px;top:1177.23px;font-size:22.17px;line-height:22.17px;font-weight:400;color:#666666;transform:scaleX(1.0808);transform-origin:1.75px 0;">Dec 6</div>
<div class="t" style="left:967.25px;top:1177.23px;font-size:22.17px;line-height:22.17px;font-weight:400;color:#666666;transform:scaleX(1.0760);transform-origin:1.75px 0;">Dec 9</div>
<div class="t" style="left:1219.95px;top:1177.23px;font-size:22.17px;line-height:22.17px;font-weight:400;color:#666666;transform:scaleX(1.0369);transform-origin:1.75px 0;">Dec 13</div>
<div class="t" style="left:1484.55px;top:1177.23px;font-size:22.17px;line-height:22.17px;font-weight:400;color:#666666;transform:scaleX(1.0076);transform-origin:1.75px 0;">Dec 17</div>
<div class="t" style="left:1677.15px;top:1177.23px;font-size:22.17px;line-height:22.17px;font-weight:400;color:#666666;transform:scaleX(1.0763);transform-origin:1.75px 0;">Dec 20</div>
<div class="t" style="left:1940.25px;top:1177.23px;font-size:22.17px;line-height:22.17px;font-weight:400;color:#666666;transform:scaleX(1.0714);transform-origin:1.75px 0;">Dec 24</div>
<div class="t" style="left:2203.85px;top:1177.23px;font-size:22.17px;line-height:22.17px;font-weight:400;color:#666666;transform:scaleX(1.0724);transform-origin:1.75px 0;">Dec 28</div>
<div class="t" style="left:2403.85px;top:1177.23px;font-size:22.17px;line-height:22.17px;font-weight:400;color:#666666;transform:scaleX(1.0507);transform-origin:1.75px 0;">Dec 31</div>
<div class="t" style="left:2652.12px;top:1177.23px;font-size:22.17px;line-height:22.17px;font-weight:400;color:#666666;transform:scaleX(1.0419);transform-origin:0.38px 0;">Jan 5</div>
<svg class="s" style="left:700px;top:400px;width:2180px;height:840px;" viewBox="700 400 2180 840"><line x1="1555.5" y1="447" x2="1555.5" y2="1148" stroke="#cccccc" stroke-width="2"/><line x1="832" y1="1148" x2="2805" y2="1148" stroke="#666666" stroke-width="2.2"/><path d="M832.00,618.00C853.92,639.70 875.83,661.40 897.75,661.40C919.67,661.40 941.58,642.00 963.50,642.00C985.42,642.00 1007.33,703.00 1029.25,703.00C1051.17,703.00 1073.08,550.40 1095.00,550.40C1116.92,550.40 1138.83,757.50 1160.75,757.50C1182.67,757.50 1204.58,745.67 1226.50,722.00C1248.42,698.33 1270.33,535.30 1292.25,535.30C1314.17,535.30 1336.08,723.80 1358.00,723.80C1379.92,723.80 1401.83,723.80 1423.75,723.80C1445.67,723.80 1467.58,751.40 1489.50,751.40C1511.42,751.40 1533.33,595.00 1555.25,595.00C1577.17,595.00 1599.08,800.00 1621.00,800.00C1642.92,800.00 1664.83,696.00 1686.75,696.00C1708.67,696.00 1730.58,727.43 1752.50,744.70C1774.42,761.97 1796.33,791.07 1818.25,799.60C1840.17,808.13 1862.08,804.30 1884.00,812.40C1905.92,820.50 1927.83,837.85 1949.75,848.20C1971.67,858.55 1993.58,874.50 2015.50,874.50C2037.42,874.50 2059.33,858.40 2081.25,851.80C2103.17,845.20 2125.08,834.90 2147.00,834.90C2168.92,834.90 2190.83,861.52 2212.75,870.70C2234.67,879.88 2256.58,890.00 2278.50,890.00C2300.42,890.00 2322.33,888.50 2344.25,888.50C2366.17,888.50 2388.08,888.50 2410.00,888.50C2431.92,888.50 2453.83,891.00 2475.75,891.00C2497.67,891.00 2519.58,885.30 2541.50,873.90C2563.42,862.50 2585.33,800.30 2607.25,800.30C2629.17,800.30 2651.08,816.30 2673.00,824.80C2694.92,833.30 2716.83,833.63 2738.75,851.30C2760.67,868.97 2782.58,928.98 2804.50,989.00" fill="none" stroke="#6330c2" stroke-width="4"/><path d="M832.00,1075.00C853.92,1080.90 875.83,1086.80 897.75,1086.80C919.67,1086.80 941.58,1078.60 963.50,1078.60C985.42,1078.60 1007.33,1080.00 1029.25,1080.00C1051.17,1080.00 1073.08,1071.60 1095.00,1071.60C1116.92,1071.60 1138.83,1102.80 1160.75,1104.00C1182.67,1105.20 1204.58,1105.80 1226.50,1105.80C1248.42,1105.80 1270.33,1084.80 1292.25,1084.80C1314.17,1084.80 1336.08,1090.83 1358.00,1096.50C1379.92,1102.17 1401.83,1118.80 1423.75,1118.80C1445.67,1118.80 1467.58,1118.60 1489.50,1118.20C1511.42,1117.80 1533.33,1100.00 1555.25,1100.00C1577.17,1100.00 1599.08,1119.80 1621.00,1119.80C1642.92,1119.80 1664.83,1108.50 1686.75,1108.50C1708.67,1108.50 1730.58,1117.22 1752.50,1120.00C1774.42,1122.78 1796.33,1125.20 1818.25,1125.20C1840.17,1125.20 1862.08,1120.10 1884.00,1120.10C1905.92,1120.10 1927.83,1128.50 1949.75,1128.50C1971.67,1128.50 1993.58,1124.20 2015.50,1123.60C2037.42,1123.00 2059.33,1122.70 2081.25,1122.70C2103.17,1122.70 2125.08,1127.08 2147.00,1129.50C2168.92,1131.92 2190.83,1137.20 2212.75,1137.20C2234.67,1137.20 2256.58,1128.50 2278.50,1128.50C2300.42,1128.50 2322.33,1131.40 2344.25,1131.80C2366.17,1132.20 2388.08,1132.40 2410.00,1132.40C2431.92,1132.40 2453.83,1132.40 2475.75,1132.40C2497.67,1132.40 2519.58,1133.30 2541.50,1133.30C2563.42,1133.30 2585.33,1121.90 2607.25,1121.90C2629.17,1121.90 2651.08,1123.10 2673.00,1124.50C2694.92,1125.90 2716.83,1128.22 2738.75,1130.30C2760.67,1132.38 2782.58,1134.69 2804.50,1137.00" fill="none" stroke="#4590e3" stroke-width="4"/><path d="M832.00,1021.70C853.92,1022.70 875.83,1023.70 897.75,1023.70C919.67,1023.70 941.58,1011.00 963.50,1011.00C985.42,1011.00 1007.33,1035.30 1029.25,1035.30C1051.17,1035.30 1073.08,1010.70 1095.00,1010.70C1116.92,1010.70 1138.83,1055.10 1160.75,1055.10C1182.67,1055.10 1204.58,1053.67 1226.50,1050.80C1248.42,1047.93 1270.33,1021.20 1292.25,1021.20C1314.17,1021.20 1336.08,1042.50 1358.00,1042.50C1379.92,1042.50 1401.83,1040.20 1423.75,1040.20C1445.67,1040.20 1467.58,1044.00 1489.50,1044.00C1511.42,1044.00 1533.33,1040.20 1555.25,1040.20C1577.17,1040.20 1599.08,1061.10 1621.00,1061.10C1642.92,1061.10 1664.83,1042.50 1686.75,1042.50C1708.67,1042.50 1730.58,1052.17 1752.50,1055.50C1774.42,1058.83 1796.33,1060.37 1818.25,1062.50C1840.17,1064.63 1862.08,1064.75 1884.00,1068.30C1905.92,1071.85 1927.83,1079.92 1949.75,1083.80C1971.67,1087.68 1993.58,1091.60 2015.50,1091.60C2037.42,1091.60 2059.33,1091.60 2081.25,1091.60C2103.17,1091.60 2125.08,1074.70 2147.00,1074.70C2168.92,1074.70 2190.83,1081.87 2212.75,1085.00C2234.67,1088.13 2256.58,1093.50 2278.50,1093.50C2300.42,1093.50 2322.33,1085.48 2344.25,1082.90C2366.17,1080.32 2388.08,1078.00 2410.00,1078.00C2431.92,1078.00 2453.83,1080.57 2475.75,1083.80C2497.67,1087.03 2519.58,1097.40 2541.50,1097.40C2563.42,1097.40 2585.33,1039.00 2607.25,1039.00C2629.17,1039.00 2651.08,1051.97 2673.00,1059.50C2694.92,1067.03 2716.83,1075.62 2738.75,1084.20" fill="none" stroke="#225b5b" stroke-width="4"/><path d="M832.00,1127.50C853.92,1127.02 875.83,1126.53 897.75,1124.60C919.67,1122.67 941.58,1109.00 963.50,1109.00C985.42,1109.00 1007.33,1124.60 1029.25,1124.60C1051.17,1124.60 1073.08,1116.30 1095.00,1116.30C1116.92,1116.30 1138.83,1130.73 1160.75,1131.40C1182.67,1132.07 1204.58,1132.40 1226.50,1132.40C1248.42,1132.40 1270.33,1131.00 1292.25,1131.00C1314.17,1131.00 1336.08,1131.13 1358.00,1131.40C1379.92,1131.67 1401.83,1136.20 1423.75,1136.20C1445.67,1136.20 1467.58,1135.62 1489.50,1135.30C1511.42,1134.98 1533.33,1134.30 1555.25,1134.30C1577.17,1134.30 1599.08,1138.20 1621.00,1138.20C1642.92,1138.20 1664.83,1135.30 1686.75,1135.30C1708.67,1135.30 1730.58,1140.40 1752.50,1140.40C1774.42,1140.40 1796.33,1140.23 1818.25,1140.00C1840.17,1139.77 1862.08,1139.00 1884.00,1139.00C1905.92,1139.00 1927.83,1140.33 1949.75,1141.00C1971.67,1141.67 1993.58,1142.33 2015.50,1143.00C2037.42,1143.67 2059.33,1145.00 2081.25,1145.00C2103.17,1145.00 2125.08,1141.50 2147.00,1141.50C2168.92,1141.50 2190.83,1145.20 2212.75,1145.20C2234.67,1145.20 2256.58,1143.62 2278.50,1143.00C2300.42,1142.38 2322.33,1142.08 2344.25,1141.50C2366.17,1140.92 2388.08,1139.50 2410.00,1139.50C2431.92,1139.50 2453.83,1144.00 2475.75,1144.00C2497.67,1144.00 2519.58,1144.00 2541.50,1144.00C2563.42,1144.00 2585.33,1138.00 2607.25,1138.00C2629.17,1138.00 2651.08,1142.30 2673.00,1142.30C2694.92,1142.30 2716.83,1141.55 2738.75,1140.80" fill="none" stroke="#8e2250" stroke-width="4"/><path d="M832.00,1127.00C853.92,1121.75 875.83,1116.50 897.75,1116.50C919.67,1116.50 941.58,1117.07 963.50,1118.20C985.42,1119.33 1007.33,1129.00 1029.25,1129.00C1051.17,1129.00 1073.08,1125.00 1095.00,1125.00C1116.92,1125.00 1138.83,1128.50 1160.75,1128.50C1182.67,1128.50 1204.58,1128.50 1226.50,1128.50C1248.42,1128.50 1270.33,1125.40 1292.25,1125.40C1314.17,1125.40 1336.08,1127.00 1358.00,1127.00C1379.92,1127.00 1401.83,1126.00 1423.75,1125.60C1445.67,1125.20 1467.58,1124.60 1489.50,1124.60C1511.42,1124.60 1533.33,1127.08 1555.25,1127.90C1577.17,1128.72 1599.08,1129.50 1621.00,1129.50C1642.92,1129.50 1664.83,1129.17 1686.75,1128.50C1708.67,1127.83 1730.58,1125.40 1752.50,1125.40C1774.42,1125.40 1796.33,1127.83 1818.25,1129.00C1840.17,1130.17 1862.08,1132.40 1884.00,1132.40C1905.92,1132.40 1927.83,1130.40 1949.75,1130.40C1971.67,1130.40 1993.58,1130.75 2015.50,1131.40C2037.42,1132.05 2059.33,1134.30 2081.25,1134.30C2103.17,1134.30 2125.08,1131.40 2147.00,1131.40C2168.92,1131.40 2190.83,1133.68 2212.75,1135.30C2234.67,1136.92 2256.58,1141.10 2278.50,1141.10C2300.42,1141.10 2322.33,1135.57 2344.25,1134.30C2366.17,1133.03 2388.08,1132.40 2410.00,1132.40C2431.92,1132.40 2453.83,1134.30 2475.75,1134.30C2497.67,1134.30 2519.58,1133.67 2541.50,1132.40C2563.42,1131.13 2585.33,1115.40 2607.25,1115.40C2629.17,1115.40 2651.08,1120.10 2673.00,1122.80C2694.92,1125.50 2716.83,1128.55 2738.75,1131.60" fill="none" stroke="#e5585d" stroke-width="4"/><path d="M832.00,1143.40C853.92,1142.80 875.83,1142.20 897.75,1141.00C919.67,1139.80 941.58,1136.20 963.50,1136.20C985.42,1136.20 1007.33,1142.00 1029.25,1142.00C1051.17,1142.00 1073.08,1141.50 1095.00,1141.50C1116.92,1141.50 1138.83,1143.00 1160.75,1143.00C1182.67,1143.00 1204.58,1142.38 1226.50,1142.00C1248.42,1141.62 1270.33,1140.70 1292.25,1140.70C1314.17,1140.70 1336.08,1145.40 1358.00,1145.40C1379.92,1145.40 1401.83,1145.40 1423.75,1145.40C1445.67,1145.40 1467.58,1143.97 1489.50,1143.40C1511.42,1142.83 1533.33,1142.00 1555.25,1142.00C1577.17,1142.00 1599.08,1145.00 1621.00,1145.00C1642.92,1145.00 1664.83,1142.70 1686.75,1142.70C1708.67,1142.70 1730.58,1143.12 1752.50,1143.50C1774.42,1143.88 1796.33,1145.00 1818.25,1145.00C1840.17,1145.00 1862.08,1145.00 1884.00,1145.00C1905.92,1145.00 1927.83,1142.70 1949.75,1142.70C1971.67,1142.70 1993.58,1143.55 2015.50,1144.00C2037.42,1144.45 2059.33,1145.40 2081.25,1145.40C2103.17,1145.40 2125.08,1144.00 2147.00,1144.00C2168.92,1144.00 2190.83,1146.00 2212.75,1146.00C2234.67,1146.00 2256.58,1146.00 2278.50,1146.00C2300.42,1146.00 2322.33,1145.80 2344.25,1145.40C2366.17,1145.00 2388.08,1143.00 2410.00,1143.00C2431.92,1143.00 2453.83,1146.00 2475.75,1146.00C2497.67,1146.00 2519.58,1145.58 2541.50,1145.00C2563.42,1144.42 2585.33,1142.50 2607.25,1142.50C2629.17,1142.50 2651.08,1144.20 2673.00,1144.20C2694.92,1144.20 2716.83,1143.75 2738.75,1143.30" fill="none" stroke="#4f0b0b" stroke-width="4"/><circle cx="1555.25" cy="595" r="7" fill="#6330c2" stroke="#fff" stroke-width="3.5"/><circle cx="1555.25" cy="1100" r="7" fill="#4590e3" stroke="#fff" stroke-width="3.5"/><circle cx="1555.25" cy="1040.2" r="7" fill="#225b5b" stroke="#fff" stroke-width="3.5"/><circle cx="1555.25" cy="1134.3" r="7" fill="#8e2250" stroke="#fff" stroke-width="3.5"/><circle cx="1555.25" cy="1127.9" r="7" fill="#e5585d" stroke="#fff" stroke-width="3.5"/><circle cx="1555.25" cy="1142" r="7" fill="#4f0b0b" stroke="#fff" stroke-width="3.5"/></svg>
<div class="b" style="left:712px;top:1272px;width:2136px;height:328px;overflow:hidden">
<div class="b" style="left:0;top:0;width:2136px;height:2px;background:#e5e7eb"></div>
<div class="b" style="left:0;top:2px;width:2136px;height:86px;background:#f9fafb"></div>
<div class="b" style="left:0;top:88px;width:2136px;height:2px;background:#e5e7eb"></div>
<div class="b" style="left:0;top:182px;width:2136px;height:2px;background:#e5e7eb"></div>
<div class="b" style="left:0;top:276px;width:2136px;height:2px;background:#e5e7eb"></div>
</div>
<div class="b" style="left:736px;top:1299px;width:26px;height:26px;border-radius:4px;background:#3b76f0"></div>
<svg class="s" style="left:736px;top:1299px;width:26px;height:26px;" viewBox="736 1299 26 26"><path d="M740.5 1312.5 L746.5 1318.5 L757.5 1304.5" fill="none" stroke="#fff" stroke-width="3.4" stroke-linecap="square"/></svg>
<div class="t" style="left:831.33px;top:1303.61px;font-size:25.51px;line-height:25.51px;font-weight:400;color:#111827;transform:scaleX(0.9904);transform-origin:1.87px 0;-webkit-text-stroke:0.51px #111827;">Event</div>
<div class="t" style="left:1140.73px;top:1303.61px;font-size:25.51px;line-height:25.51px;font-weight:400;color:#111827;transform:scaleX(0.9840);transform-origin:-0.13px 0;-webkit-text-stroke:0.51px #111827;">Average</div>
<svg class="s" style="left:1243.3px;top:1300px;width:20.0px;height:34px;" viewBox="1243.3 1300 20.0 34"><g fill="none" stroke="#111827" stroke-width="2" stroke-linecap="round" stroke-linejoin="round"><path d="M1248.5 1313.6 L1253.3 1308.8 L1258.1 1313.6"/><path d="M1248.5 1320.4 L1253.3 1325.2 L1258.1 1320.4"/></g></svg>
<div class="t" style="left:1315.75px;top:1303.61px;font-size:25.51px;line-height:25.51px;font-weight:400;color:#111827;transform:scaleX(1.0520);transform-origin:0.25px 0;-webkit-text-stroke:0.51px #111827;">Total</div>
<svg class="s" style="left:1381px;top:1300px;width:20px;height:34px;" viewBox="1381 1300 20 34"><g fill="none" stroke="#111827" stroke-width="2" stroke-linecap="round" stroke-linejoin="round"><path d="M1386.2 1313.6 L1391 1308.8 L1395.8 1313.6"/><path d="M1386.2 1320.4 L1391 1325.2 L1395.8 1320.4"/></g></svg>
<div class="t" style="left:1489.13px;top:1303.61px;font-size:25.51px;line-height:25.51px;font-weight:400;color:#111827;transform:scaleX(1.0327);transform-origin:1.87px 0;-webkit-text-stroke:0.51px #111827;">Dec 6</div>
<svg class="s" style="left:1567px;top:1300px;width:20px;height:34px;" viewBox="1567 1300 20 34"><g fill="none" stroke="#111827" stroke-width="2" stroke-linecap="round" stroke-linejoin="round"><path d="M1572.2 1313.6 L1577 1308.8 L1581.8 1313.6"/><path d="M1572.2 1320.4 L1577 1325.2 L1581.8 1320.4"/></g></svg>
<div class="t" style="left:1676.73px;top:1303.61px;font-size:25.51px;line-height:25.51px;font-weight:400;color:#111827;transform:scaleX(1.0116);transform-origin:1.87px 0;-webkit-text-stroke:0.51px #111827;">Dec 7</div>
<svg class="s" style="left:1752.7px;top:1300px;width:20.0px;height:34px;" viewBox="1752.7 1300 20.0 34"><g fill="none" stroke="#111827" stroke-width="2" stroke-linecap="round" stroke-linejoin="round"><path d="M1757.9 1313.6 L1762.7 1308.8 L1767.5 1313.6"/><path d="M1757.9 1320.4 L1762.7 1325.2 L1767.5 1320.4"/></g></svg>
<div class="t" style="left:1861.83px;top:1303.61px;font-size:25.51px;line-height:25.51px;font-weight:400;color:#111827;transform:scaleX(1.0171);transform-origin:1.87px 0;-webkit-text-stroke:0.51px #111827;">Dec 8</div>
<svg class="s" style="left:1940px;top:1300px;width:20px;height:34px;" viewBox="1940 1300 20 34"><g fill="none" stroke="#111827" stroke-width="2" stroke-linecap="round" stroke-linejoin="round"><path d="M1945.2 1313.6 L1950 1308.8 L1954.8 1313.6"/><path d="M1945.2 1320.4 L1950 1325.2 L1954.8 1320.4"/></g></svg>
<div class="t" style="left:2047.63px;top:1303.61px;font-size:25.51px;line-height:25.51px;font-weight:400;color:#111827;transform:scaleX(1.0191);transform-origin:1.87px 0;-webkit-text-stroke:0.51px #111827;">Dec 9</div>
<svg class="s" style="left:2125.7px;top:1300px;width:20.0px;height:34px;" viewBox="2125.7 1300 20.0 34"><g fill="none" stroke="#111827" stroke-width="2" stroke-linecap="round" stroke-linejoin="round"><path d="M2130.8999999999996 1313.6 L2135.7 1308.8 L2140.5 1313.6"/><path d="M2130.8999999999996 1320.4 L2135.7 1325.2 L2140.5 1320.4"/></g></svg>
<div class="t" style="left:2236.13px;top:1303.61px;font-size:25.51px;line-height:25.51px;font-weight:400;color:#111827;transform:scaleX(0.9835);transform-origin:1.87px 0;-webkit-text-stroke:0.51px #111827;">Dec 10</div>
<svg class="s" style="left:2325.7px;top:1300px;width:20.0px;height:34px;" viewBox="2325.7 1300 20.0 34"><g fill="none" stroke="#111827" stroke-width="2" stroke-linecap="round" stroke-linejoin="round"><path d="M2330.8999999999996 1313.6 L2335.7 1308.8 L2340.5 1313.6"/><path d="M2330.8999999999996 1320.4 L2335.7 1325.2 L2340.5 1320.4"/></g></svg>
<div class="t" style="left:2440.53px;top:1303.61px;font-size:25.51px;line-height:25.51px;font-weight:400;color:#111827;transform:scaleX(0.9519);transform-origin:1.87px 0;-webkit-text-stroke:0.51px #111827;">Dec 11</div>
<svg class="s" style="left:2526px;top:1300px;width:20px;height:34px;" viewBox="2526 1300 20 34"><g fill="none" stroke="#111827" stroke-width="2" stroke-linecap="round" stroke-linejoin="round"><path d="M2531.2 1313.6 L2536 1308.8 L2540.8 1313.6"/><path d="M2531.2 1320.4 L2536 1325.2 L2540.8 1320.4"/></g></svg>
<div class="t" style="left:2636.73px;top:1303.61px;font-size:25.51px;line-height:25.51px;font-weight:400;color:#111827;transform:scaleX(0.9793);transform-origin:1.87px 0;-webkit-text-stroke:0.51px #111827;">Dec 12</div>
<svg class="s" style="left:2725.3px;top:1300px;width:20.0px;height:34px;" viewBox="2725.3 1300 20.0 34"><g fill="none" stroke="#111827" stroke-width="2" stroke-linecap="round" stroke-linejoin="round"><path d="M2730.5 1313.6 L2735.3 1308.8 L2740.1000000000004 1313.6"/><path d="M2730.5 1320.4 L2735.3 1325.2 L2740.1000000000004 1320.4"/></g></svg>
<div class="b" style="left:2830px;top:1274px;width:18px;height:86px;overflow:hidden">
<div class="t" style="left:7.7px;top:29.61px;font-size:25.5px;line-height:25.5px;color:#111827;-webkit-text-stroke:0.35px #111827">D</div>
</div>
<div class="b" style="left:737px;top:1387px;width:30px;height:30px;border-radius:7px;background:#eceef1"></div>
<div class="b" style="left:738px;top:1388px;width:28px;height:28px;border-radius:6px;background:#6330c2"></div>
<svg class="s" style="left:738px;top:1388px;width:28px;height:28px;" viewBox="738 1388 28 28"><path d="M745.3 1404.8 L751.2 1410 L759.6 1397.2" fill="none" stroke="#fff" stroke-width="2.5" stroke-linecap="round" stroke-linejoin="round"/></svg>
<div class="t" style="left:833.20px;top:1394.65px;font-size:25.22px;line-height:25.22px;font-weight:400;color:#111827;transform:scaleX(0.9177);transform-origin:0.00px 0;">APP_OPEN-A</div>
<div class="t" style="left:1174.05px;top:1394.65px;font-size:25.22px;line-height:25.22px;font-weight:400;color:#111827;transform:scaleX(1.0600);transform-origin:1.25px 0;">639.26</div>
<div class="t" style="left:1323.61px;top:1394.65px;font-size:25.22px;line-height:25.22px;font-weight:400;color:#111827;">19817</div>
<div class="t" style="left:1537.20px;top:1394.65px;font-size:25.22px;line-height:25.22px;font-weight:400;color:#111827;">910</div>
<div class="t" style="left:1723.27px;top:1394.65px;font-size:25.22px;line-height:25.22px;font-weight:400;color:#111827;">832</div>
<div class="t" style="left:1910.57px;top:1394.65px;font-size:25.22px;line-height:25.22px;font-weight:400;color:#111827;">867</div>
<div class="t" style="left:2096.27px;top:1394.65px;font-size:25.22px;line-height:25.22px;font-weight:400;color:#111827;">762</div>
<div class="t" style="left:2281.67px;top:1394.65px;font-size:25.22px;line-height:25.22px;font-weight:400;color:#111827;">1024</div>
<div class="t" style="left:2496.32px;top:1394.65px;font-size:25.22px;line-height:25.22px;font-weight:400;color:#111827;">668</div>
<div class="t" style="left:2695.62px;top:1394.65px;font-size:25.22px;line-height:25.22px;font-weight:400;color:#111827;">726</div>
<div class="b" style="left:737px;top:1481.3px;width:30px;height:30px;border-radius:7px;background:#eceef1"></div>
<div class="b" style="left:738px;top:1482.3px;width:28px;height:28px;border-radius:6px;background:#225b5b"></div>
<svg class="s" style="left:738px;top:1482.3px;width:28px;height:28.0px;" viewBox="738 1482.3 28 28.0"><path d="M745.3 1499.1 L751.2 1504.3 L759.6 1491.5" fill="none" stroke="#fff" stroke-width="2.5" stroke-linecap="round" stroke-linejoin="round"/></svg>
<div class="t" style="left:833.20px;top:1488.95px;font-size:25.22px;line-height:25.22px;font-weight:400;color:#111827;transform:scaleX(0.9162);transform-origin:0.00px 0;">ADD_TO_CART-C</div>
<div class="t" style="left:1189.17px;top:1488.95px;font-size:25.22px;line-height:25.22px;font-weight:400;color:#111827;transform:scaleX(1.0600);transform-origin:1.87px 0;">153.9</div>
<div class="t" style="left:1337.59px;top:1488.95px;font-size:25.22px;line-height:25.22px;font-weight:400;color:#111827;">4617</div>
<div class="t" style="left:1537.32px;top:1488.95px;font-size:25.22px;line-height:25.22px;font-weight:400;color:#111827;">216</div>
<div class="t" style="left:1723.27px;top:1488.95px;font-size:25.22px;line-height:25.22px;font-weight:400;color:#111827;">212</div>
<div class="t" style="left:1910.32px;top:1488.95px;font-size:25.22px;line-height:25.22px;font-weight:400;color:#111827;">235</div>
<div class="t" style="left:2096.27px;top:1488.95px;font-size:25.22px;line-height:25.22px;font-weight:400;color:#111827;">192</div>
<div class="t" style="left:2296.02px;top:1488.95px;font-size:25.22px;line-height:25.22px;font-weight:400;color:#111827;">236</div>
<div class="t" style="left:2496.32px;top:1488.95px;font-size:25.22px;line-height:25.22px;font-weight:400;color:#111827;">158</div>
<div class="t" style="left:2695.62px;top:1488.95px;font-size:25.22px;line-height:25.22px;font-weight:400;color:#111827;">166</div>
<div class="b" style="left:737px;top:1576.5px;width:30px;height:30px;border-radius:7px;background:#eceef1"></div>
<div class="b" style="left:738px;top:1577.5px;width:28px;height:28px;border-radius:6px;background:#4590e3"></div>
<svg class="s" style="left:738px;top:1577.5px;width:28px;height:28.0px;" viewBox="738 1577.5 28 28.0"><path d="M745.3 1594.3 L751.2 1599.5 L759.6 1586.7" fill="none" stroke="#fff" stroke-width="2.5" stroke-linecap="round" stroke-linejoin="round"/></svg>
<div class="t" style="left:833.20px;top:1584.15px;font-size:25.22px;line-height:25.22px;font-weight:400;color:#111827;transform:scaleX(0.9248);transform-origin:0.00px 0;">APP_OPEN-B</div>
<div class="t" style="left:1188.99px;top:1584.15px;font-size:25.22px;line-height:25.22px;font-weight:400;color:#111827;transform:scaleX(1.0600);transform-origin:1.00px 0;">57.45</div>
<div class="t" style="left:1337.47px;top:1584.15px;font-size:25.22px;line-height:25.22px;font-weight:400;color:#111827;">1781</div>
<div class="t" style="left:1537.32px;top:1584.15px;font-size:25.22px;line-height:25.22px;font-weight:400;color:#111827;">125</div>
<div class="t" style="left:1723.02px;top:1584.15px;font-size:25.22px;line-height:25.22px;font-weight:400;color:#111827;">103</div>
<div class="t" style="left:1912.32px;top:1584.15px;font-size:25.22px;line-height:25.22px;font-weight:400;color:#111827;">119</div>
<div class="t" style="left:2097.90px;top:1584.15px;font-size:25.22px;line-height:25.22px;font-weight:400;color:#111827;">115</div>
<div class="t" style="left:2295.90px;top:1584.15px;font-size:25.22px;line-height:25.22px;font-weight:400;color:#111827;">130</div>
<div class="t" style="left:2510.06px;top:1584.15px;font-size:25.22px;line-height:25.22px;font-weight:400;color:#111827;">74</div>
<div class="t" style="left:2709.86px;top:1584.15px;font-size:25.22px;line-height:25.22px;font-weight:400;color:#111827;">71</div>
</body></html>
